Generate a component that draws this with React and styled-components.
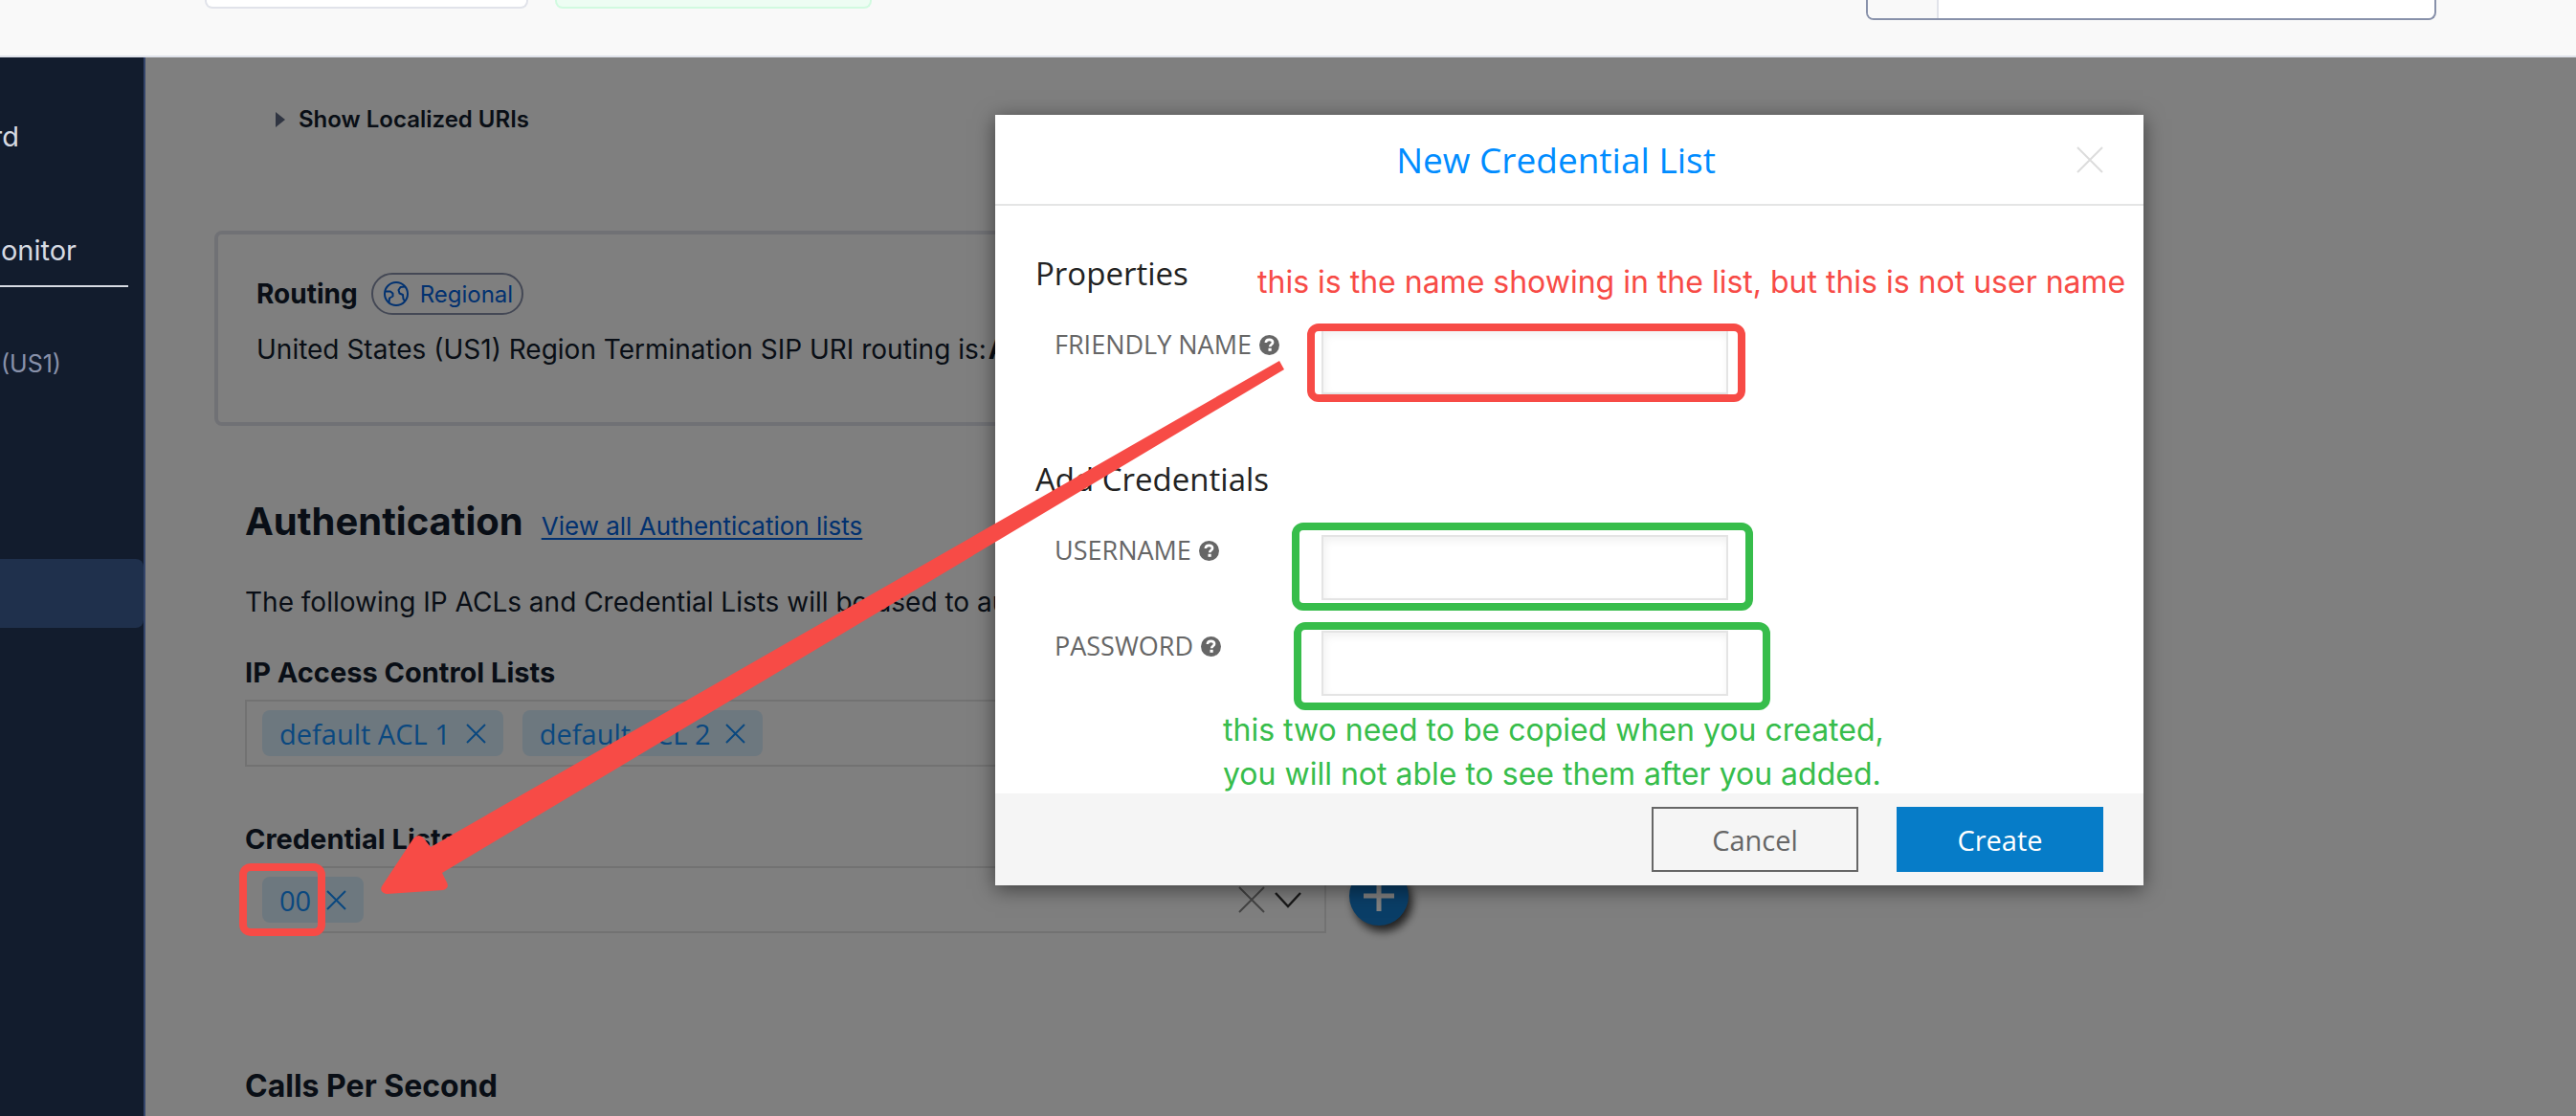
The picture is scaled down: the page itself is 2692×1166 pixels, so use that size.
import React from "react";
import styled, { createGlobalStyle } from "styled-components";

const ui = `Inter, "Liberation Sans", sans-serif`;
const brand = `"Open Sans", "Noto Sans", sans-serif`;
const red = "#f74b46";
const green = "#37bd4b";

const GlobalStyle = createGlobalStyle`
  *, *::before, *::after { box-sizing: border-box; }
  body { margin: 0; background: #fff; color: #121c2d; font-family: ${ui}; }
  h1, h2, h3, p { margin: 0; }
  button, input, select { font: inherit; margin: 0; }
`;

const Page = styled.div`
  position: relative;
  display: flex;
  flex-direction: column;
  min-height: 100vh;
  overflow: hidden;
`;

const TopBar = styled.header`
  display: flex;
  align-items: flex-start;
  height: 60px;
  padding: 0 146px 0 214px;
  gap: 28px;
  background: #f9f9f9;
  border-bottom: 2px solid #dfe2ea;
`;

const TopTile = styled.div`
  width: ${(p) => p.$width}px;
  height: 9px;
  border: 2px solid ${(p) => p.$line};
  border-top: 0;
  border-radius: 0 0 8px 8px;
  background: ${(p) => p.$fill};
`;

const SearchBox = styled.div`
  display: flex;
  width: 596px;
  height: 21px;
  margin-left: auto;
  border: 2px solid #8891aa;
  border-top: 0;
  border-radius: 0 0 8px 8px;
  background: #fff;
  overflow: hidden;
`;

const SearchPrefix = styled.div`
  width: 74px;
  background: #f9f9f9;
  border-right: 2px solid #e1e3ea;
`;

const SearchInput = styled.input`
  flex: 1;
  min-width: 0;
  border: 0;
  background: transparent;
  outline: 0;
`;

const Body = styled.div`
  display: flex;
  flex: 1;
`;

const Sidebar = styled.nav`
  display: flex;
  flex-direction: column;
  flex: none;
  width: 152px;
  padding-top: 61px;
  background: #121c2d;
  border-right: 2px solid #34456b;
`;

const NavLink = styled.a`
  display: flex;
  justify-content: flex-end;
  width: ${(p) => p.$width}px;
  font-size: 29px;
  line-height: 44px;
  color: #d6dae2;
  text-decoration: none;
`;

const NavGroup = styled.div`
  width: 134px;
  margin-top: 75px;
  padding-bottom: 14px;
  border-bottom: 2px solid #d6dae2;
`;

const NavNote = styled.p`
  width: 64px;
  margin-top: 60px;
  text-align: right;
  font-size: 25px;
  line-height: 40px;
  color: #8891aa;
`;

const NavCurrent = styled.div`
  height: 72px;
  margin-top: 184px;
  border-radius: 0 8px 8px 0;
  background: #1f304c;
`;

const Main = styled.main`
  position: relative;
  flex: 1;
  min-width: 0;
  padding: 49px 72px 10px;
`;

const Disclosure = styled.button`
  display: flex;
  align-items: center;
  gap: 14px;
  margin-left: 64px;
  padding: 0;
  border: 0;
  background: none;
  color: inherit;
  font-size: 24px;
  font-weight: 600;
  line-height: 32px;
`;

const Card = styled.section`
  width: 1200px;
  margin-top: 100px;
  padding: 40px 40px 58px;
  border: 4px solid #e1e3ea;
  border-radius: 8px;
`;

const CardHead = styled.div`
  display: flex;
  align-items: center;
  gap: 14px;
  margin-bottom: 18px;
`;

const CardTitle = styled.h2`
  font-size: 28px;
  line-height: 36px;
  font-weight: 700;
`;

const Pill = styled.span`
  display: flex;
  align-items: center;
  gap: 12px;
  height: 44px;
  padding: 0 9px 0 11px;
  border: 2px solid #8891aa;
  border-radius: 22px;
  color: #0263e0;
  font-size: 24px;
`;

const Text = styled.p`
  display: flex;
  gap: 2px;
  font-size: 28px;
  line-height: 36px;
  white-space: nowrap;
`;

const Section = styled.section`
  padding-left: 32px;
`;

const SectionHead = styled.div`
  display: flex;
  align-items: baseline;
  gap: 19px;
  margin: 76px 0 42px;
`;

const SectionTitle = styled.h1`
  font-size: 40px;
  line-height: 48px;
  font-weight: 700;
`;

const Link = styled.a`
  color: #0263e0;
  font-size: 26px;
  text-underline-offset: 3px;
`;

const ListLabel = styled.h3`
  margin: ${(p) => p.$top}px 0 10px;
  font-size: 29px;
  line-height: 36px;
  font-weight: 700;
`;

const PickerRow = styled.div`
  display: flex;
  align-items: flex-start;
  gap: 24px;
`;

const Picker = styled.div`
  display: flex;
  align-items: center;
  gap: 20px;
  width: 1130px;
  height: 70px;
  padding: 0 16px;
  border: 2px solid #e4e4e4;
`;

const Chip = styled.span`
  display: flex;
  align-items: center;
  gap: 16px;
  height: 48px;
  padding: 0 18px;
  border-radius: 8px;
  background: #dbf0ff;
  color: #1490ff;
  font-family: ${brand};
  font-size: 29px;
`;

const IconButton = styled.button`
  display: flex;
  padding: 0;
  border: 0;
  background: none;
  color: inherit;
`;

const PickerTools = styled.div`
  display: flex;
  align-items: center;
  gap: 10px;
  margin-left: auto;
  padding-right: 8px;
  color: #333;
`;

const AddButton = styled.button`
  display: flex;
  align-items: center;
  justify-content: center;
  width: 62px;
  height: 62px;
  padding: 0;
  border: 0;
  border-radius: 50%;
  background: #147cce;
  box-shadow: 4px 6px 10px rgba(0, 0, 0, 0.75);
`;

const NextTitle = styled.h2`
  margin-top: 140px;
  font-size: 32px;
  line-height: 40px;
  font-weight: 700;
`;

const Shade = styled.div`
  position: absolute;
  inset: 0;
  background: rgba(0, 0, 0, 0.5);
`;

const Dialog = styled.section`
  position: absolute;
  top: 120px;
  left: 1040px;
  width: 1200px;
  background: #fff;
  box-shadow: 0 4px 20px rgba(0, 0, 0, 0.5);
  font-family: ${brand};
`;

const DialogHead = styled.header`
  display: flex;
  align-items: center;
  height: 95px;
  padding: 0 42px;
  border-bottom: 2px solid #e4e5e5;
`;

const DialogTitle = styled.h2`
  flex: 1;
  color: #008cff;
  font-size: 37px;
  font-weight: 400;
  text-align: center;
`;

const CloseButton = styled(IconButton)`
  color: #dcdcdc;
`;

const DialogBody = styled.div`
  padding: 51px 42px 102px;
`;

const GroupTitle = styled.h3`
  margin: ${(p) => p.$top}px 0 38px;
  color: #222;
  font-size: 33px;
  line-height: 40px;
  font-weight: 500;
`;

const Field = styled.div`
  display: grid;
  grid-template-columns: 279px 425px;
  align-items: start;
  padding-left: 20px;
  margin-top: ${(p) => p.$top || 0}px;
`;

const FieldLabel = styled.label`
  display: flex;
  align-items: center;
  gap: 8px;
  color: #666;
  font-size: 27px;
  line-height: 32px;
  white-space: nowrap;
`;

const FieldInput = styled.input`
  width: 100%;
  height: 68px;
  padding: 0 16px;
  border: 2px solid #e4e4e4;
  border-radius: 0;
  outline: 0;
  background: #fff;
  box-shadow: inset 2px 4px 8px rgba(0, 0, 0, 0.06);
`;

const DialogFoot = styled.footer`
  display: flex;
  justify-content: flex-end;
  gap: 40px;
  padding: 14px 42px;
  background: #f5f5f5;
`;

const DialogButton = styled.button`
  width: 216px;
  height: 68px;
  padding: 0;
  border: 2px solid ${(p) => (p.$primary ? "#067cc8" : "#666")};
  background: ${(p) => (p.$primary ? "#067cc8" : "transparent")};
  color: ${(p) => (p.$primary ? "#fff" : "#666")};
  font-size: 29px;
`;

const Marker = styled.div`
  position: absolute;
  left: ${(p) => p.$x}px;
  top: ${(p) => p.$y}px;
  width: ${(p) => p.$w}px;
  height: ${(p) => p.$h}px;
  border: 8px solid ${(p) => p.$color};
  border-radius: 12px;
  pointer-events: none;
`;

const Note = styled.p`
  position: absolute;
  left: ${(p) => p.$x}px;
  top: ${(p) => p.$y}px;
  color: ${(p) => p.$color};
  font-size: 32px;
  line-height: 46px;
  font-weight: 400;
  white-space: pre;
`;

const Arrow = styled.svg`
  position: absolute;
  left: 390px;
  top: 370px;
  pointer-events: none;
`;

const Cross = ({ size, stroke = 2 }) => (
  <svg width={size} height={size} viewBox={`0 0 ${size} ${size}`} fill="none" stroke="currentColor" strokeWidth={stroke} aria-hidden="true">
    <path d={`M1 1L${size - 1} ${size - 1}M${size - 1} 1L1 ${size - 1}`} />
  </svg>
);

const Globe = () => (
  <svg width="26" height="26" viewBox="0 0 26 26" fill="none" stroke="currentColor" strokeWidth="2" strokeLinejoin="round" aria-hidden="true">
    <circle cx="13" cy="13" r="12" />
    <path d="M1.500 10.500H7l2.500 2v3L6 17.500l-.5 4.500" />
    <path d="M22 5.500L17.500 6 15.500 9l1 3.500 3.500 1.500.5 4.500 1.500 2" />
  </svg>
);

const Help = () => (
  <svg width="21" height="21" viewBox="0 0 21 21" aria-hidden="true">
    <circle cx="10.500" cy="10.500" r="10.500" fill="#666" />
    <path d="M6.800 8C7 5.600 8.600 4.900 10.600 4.900c2 0 3.500 1 3.500 2.800 0 2.300-2.900 2.400-2.900 4.500" fill="none" stroke="#fff" strokeWidth="2.600" />
    <rect x="9.500" y="13.800" width="3.200" height="3" fill="#fff" />
  </svg>
);

const FormField = ({ id, label, type = "text", top }) => (
  <Field $top={top}>
    <FieldLabel htmlFor={id}>
      {label}
      <Help />
    </FieldLabel>
    <FieldInput id={id} type={type} />
  </Field>
);

const ChipItem = ({ children }) => (
  <Chip>
    {children}
    <IconButton type="button" aria-label="Remove">
      <Cross size={21} />
    </IconButton>
  </Chip>
);

export default function App() {
  return (
    <Page>
      <GlobalStyle />
      <TopBar>
        <TopTile $width={338} $line="#e1e3ea" $fill="#fff" />
        <TopTile $width={331} $line="#d1fae0" $fill="#edfdf3" />
        <SearchBox>
          <SearchPrefix />
          <SearchInput type="search" aria-label="Search" />
        </SearchBox>
      </TopBar>

      <Body>
        <Sidebar>
          <NavLink href="#dashboard" $width={20}>rd</NavLink>
          <NavGroup>
            <NavLink href="#monitor" $width={80}>onitor</NavLink>
          </NavGroup>
          <NavNote>(US1)</NavNote>
          <NavCurrent />
        </Sidebar>

        <Main>
          <Disclosure type="button">
            <svg width="10" height="16" viewBox="0 0 10 16" fill="#606b85" aria-hidden="true">
              <path d="M0 0L10 8L0 16Z" />
            </svg>
            Show Localized URIs
          </Disclosure>

          <Card>
            <CardHead>
              <CardTitle>Routing</CardTitle>
              <Pill>
                <Globe />
                Regional
              </Pill>
            </CardHead>
            <Text>
              United States (US1) Region Termination SIP URI routing is:
              <b>A</b>
            </Text>
          </Card>

          <Section>
            <SectionHead>
              <SectionTitle>Authentication</SectionTitle>
              <Link href="#lists">View all Authentication lists</Link>
            </SectionHead>
            <Text>The following IP ACLs and Credential Lists will be used to aut</Text>

            <ListLabel $top={38}>IP Access Control Lists</ListLabel>
            <Picker>
              <ChipItem>default ACL 1</ChipItem>
              <ChipItem>default ACL 2</ChipItem>
            </Picker>

            <ListLabel $top={58}>Credential Lists</ListLabel>
            <PickerRow>
              <Picker>
                <ChipItem>00</ChipItem>
                <PickerTools>
                  <IconButton type="button" aria-label="Clear">
                    <svg width="28" height="28" viewBox="0 0 28 28" fill="none" stroke="#888" strokeWidth="2">
                      <path d="M1 1L27 27M27 1L1 27" />
                    </svg>
                  </IconButton>
                  <IconButton type="button" aria-label="Open">
                    <svg width="28" height="18" viewBox="0 0 28 18" fill="none" stroke="currentColor" strokeWidth="2.500">
                      <path d="M1 2L14 16L27 2" />
                    </svg>
                  </IconButton>
                </PickerTools>
              </Picker>
              <AddButton type="button" aria-label="Add">
                <svg width="32" height="32" viewBox="0 0 32 32" stroke="#fff" strokeWidth="5">
                  <path d="M16 0V32M0 16H32" />
                </svg>
              </AddButton>
            </PickerRow>

            <NextTitle>Calls Per Second</NextTitle>
          </Section>
          <Shade />
        </Main>
      </Body>

      <Dialog role="dialog" aria-labelledby="dialog-title">
        <DialogHead>
          <DialogTitle id="dialog-title">New Credential List</DialogTitle>
          <CloseButton type="button" aria-label="Close">
            <Cross size={28} />
          </CloseButton>
        </DialogHead>
        <DialogBody>
          <GroupTitle $top={0}>Properties</GroupTitle>
          <FormField id="friendly" label="FRIENDLY NAME" />
          <GroupTitle $top={69}>Add Credentials</GroupTitle>
          <FormField id="username" label="USERNAME" />
          <FormField id="password" label="PASSWORD" type="password" top={32} />
        </DialogBody>
        <DialogFoot>
          <DialogButton type="button">Cancel</DialogButton>
          <DialogButton type="button" $primary>Create</DialogButton>
        </DialogFoot>
      </Dialog>

      <Marker $x={1366} $y={338} $w={458} $h={82} $color={red} />
      <Marker $x={1350} $y={546} $w={482} $h={92} $color={green} />
      <Marker $x={1352} $y={650} $w={498} $h={92} $color={green} />
      <Marker $x={250} $y={902} $w={90} $h={76} $color={red} />
      <Note $x={1314} $y={272} $color={red}>this is the name showing in the list, but this is not user name</Note>
      <Note $x={1278} $y={740} $color={green}>{"this two need to be copied when you created,\nyou will not able to see them after you added."}</Note>
      <Arrow width="960" height="570" viewBox="390 370 960 570" fill={red} aria-hidden="true">
        <path d="M1337 377L1342 386L462 912L467 922Q470 928 463 930L404 934Q396 932 399 926L432 876Q438 870 443 876L450 885Z" />
      </Arrow>
    </Page>
  );
}
